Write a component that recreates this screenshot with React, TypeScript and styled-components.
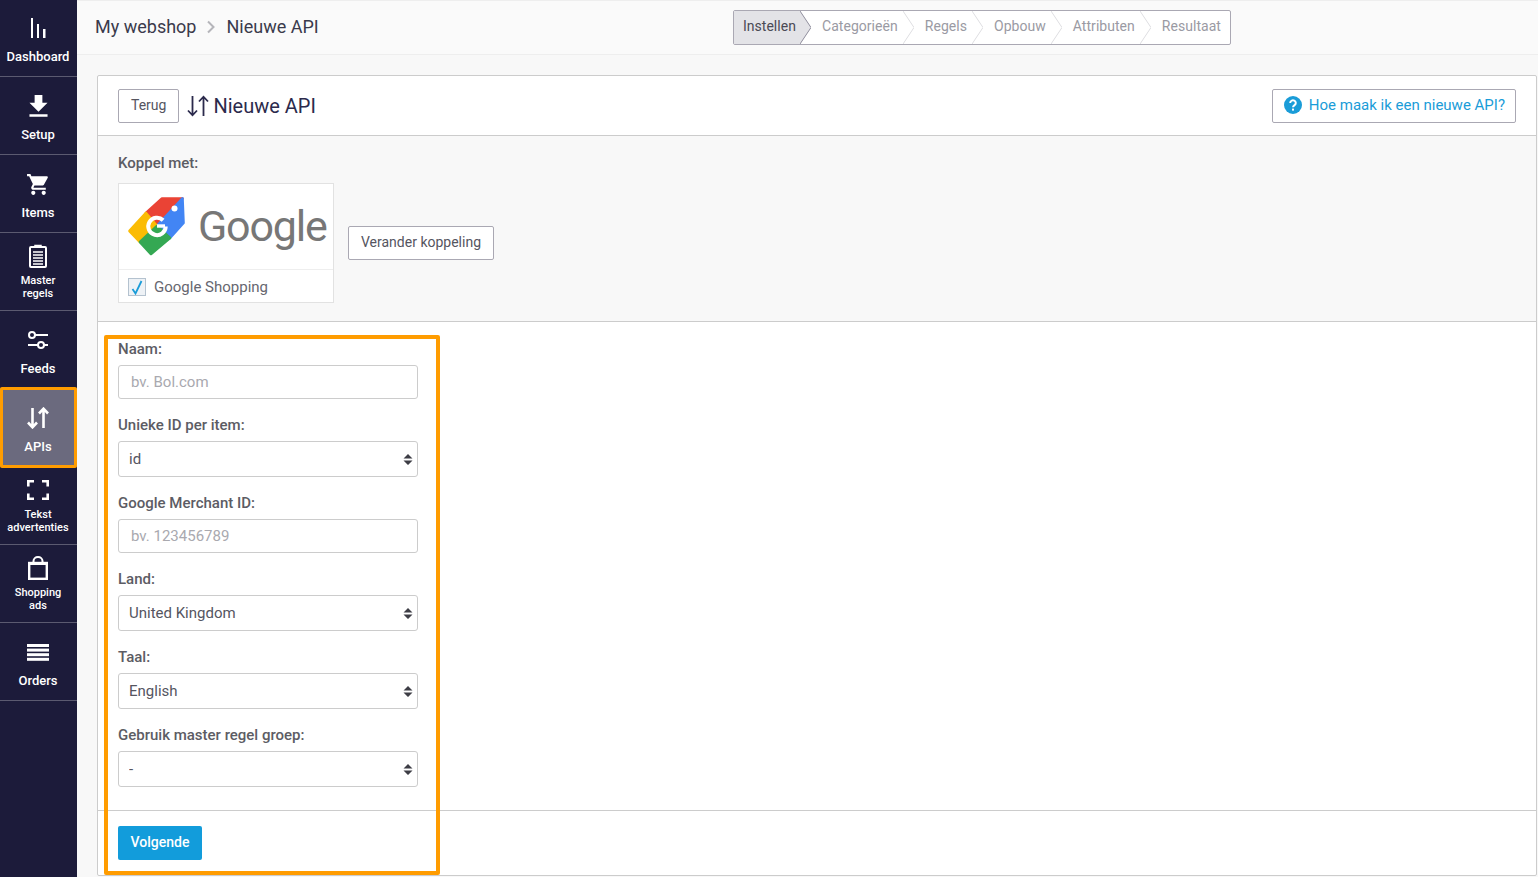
import React, { FunctionComponent, ReactNode } from "react";
import styled, { createGlobalStyle } from "styled-components";
import { MdFileDownload, MdShoppingCart } from "react-icons/md";

const GlobalStyle = createGlobalStyle`
  html, body {
    margin: 0;
    height: 100%;
    overflow: hidden;
    background: #f8f8f8;
    font-family: Roboto, "Liberation Sans", sans-serif;
  }
  * {
    box-sizing: border-box;
  }
`;

const Page = styled.div`
  display: flex;
  width: 1538px;
  height: 877px;
  overflow: hidden;
`;

const Sidebar = styled.nav`
  flex: 0 0 77px;
  background: #1c1b3a;
`;

const NavItem = styled.a<{ $twoLine?: boolean; $active?: boolean }>`
  position: relative;
  display: flex;
  flex-direction: column;
  align-items: center;
  height: 78px;
  padding: ${(p) => (p.$twoLine ? "9px" : "15px")} 1px 0 0;
  border-bottom: 1px solid #5b5a70;
  background: ${(p) => (p.$active ? "#6b6a7e" : "transparent")};
  color: #fff;
  text-align: center;

  &:first-child {
    height: 77px;
    padding-top: 14px;
  }
`;

const ActiveRing = styled.span`
  position: absolute;
  top: -2px;
  left: 0;
  right: 0;
  bottom: -2px;
  border: 3.5px solid #ff9c00;
  border-radius: 2px;
`;

const NavIcon = styled.span`
  display: flex;
  align-items: center;
  justify-content: center;
  height: 28px;
`;

const NavLabel = styled.span<{ $twoLine?: boolean }>`
  margin-top: ${(p) => (p.$twoLine ? "4px" : "7px")};
  font-size: ${(p) => (p.$twoLine ? "11px" : "13px")};
  line-height: ${(p) => (p.$twoLine ? "13px" : "16px")};
  font-weight: 500;
`;

const Main = styled.main`
  flex: 1;
  min-width: 0;
`;

const TopBar = styled.header`
  display: flex;
  align-items: center;
  justify-content: space-between;
  height: 55px;
  padding: 0 307px 0 18px;
  background: #fafafa;
  border-top: 1px solid #eeeeee;
  border-bottom: 1px solid #eeeeee;
`;

const Crumbs = styled.div`
  display: flex;
  align-items: center;
  padding-bottom: 2px;
  font-size: 18px;
  color: #3a3a4c;
`;

const CrumbArrow = styled.svg`
  margin: 1px 10px 0 10px;
`;

const Stepper = styled.ol`
  display: flex;
  height: 35px;
  margin: 0;
  padding: 0;
  list-style: none;
  background: #fff;
  border: 1px solid #aaa8b3;
  border-radius: 2px;
`;

const Step = styled.li<{ $active?: boolean }>`
  position: relative;
  display: flex;
  align-items: center;
  padding: 0 5px 3px 22px;
  font-size: 14px;
  letter-spacing: 0.04px;
  color: ${(p) => (p.$active ? "#4a4a55" : "#9a9aa3")};
  background: ${(p) => (p.$active ? "#e3e3e7" : "transparent")};

  &:first-child {
    padding-left: 9px;
    padding-right: 4px;
  }
  &:last-child {
    padding-right: 9px;
  }
`;

const StepTip = styled.svg`
  position: absolute;
  top: 0;
  left: 100%;
`;

const Card = styled.section`
  position: relative;
  width: 1440px;
  height: 801px;
  margin: 20px 0 0 20px;
  background: #fff;
  border: 1px solid #cccccc;
  border-radius: 2px;
`;

const CardHeader = styled.div`
  display: flex;
  align-items: center;
  height: 60px;
  padding: 0 20px;
  border-bottom: 1px solid #cccccc;
`;

const Button = styled.button`
  height: 34px;
  padding: 0 12px 2px;
  background: #fff;
  border: 1px solid #aaa8b3;
  border-radius: 2px;
  font-family: inherit;
  font-size: 14px;
  color: #55555f;
`;

const Title = styled.h1`
  display: flex;
  align-items: center;
  gap: 4px;
  margin: 0 0 0 8px;
  font-size: 20px;
  font-weight: 400;
  color: #2b2a4c;
`;

const HelpButton = styled(Button)`
  display: flex;
  align-items: center;
  gap: 7px;
  margin-left: auto;
  padding: 0 10px 2px 11px;
  font-size: 15px;
  color: #1a9cd8;
`;

const LinkSection = styled.div`
  height: 186px;
  padding: 17px 20px 0;
  background: #f8f8f8;
  border-bottom: 1px solid #cccccc;
`;

const Label = styled.label`
  display: block;
  height: 20px;
  margin-bottom: 6px;
  font-size: 15px;
  font-weight: 500;
  line-height: 20px;
  color: #5c5c64;
`;

const LinkRow = styled.div`
  display: flex;
  align-items: center;
  gap: 14px;
  margin-top: 10px;
`;

const ChannelBox = styled.div`
  width: 216px;
  height: 120px;
  background: #fff;
  border: 1px solid #e2e2e2;
`;

const ChannelLogo = styled.div`
  display: flex;
  align-items: center;
  height: 86px;
  padding-left: 8px;
  border-bottom: 1px solid #eeeeee;
`;

const GoogleWord = styled.span`
  margin: 0 0 1px 11px;
  font-size: 43px;
  font-weight: 400;
  letter-spacing: -1.2px;
  color: #777777;
`;

const ChannelName = styled.div`
  display: flex;
  align-items: center;
  gap: 8px;
  height: 32px;
  padding: 2px 0 0 9px;
  font-size: 15px;
  color: #66666f;
`;

const CheckBox = styled.span`
  display: flex;
  align-items: center;
  justify-content: center;
  width: 18px;
  height: 18px;
  background: #eef2f6;
  border: 1px solid #b4c2cf;
`;

const FormBody = styled.form`
  height: 489px;
  padding: 17px 20px 0;
  border-bottom: 1px solid #cccccc;
`;

const Field = styled.div`
  width: 300px;
  margin-bottom: 16px;
`;

const TextInput = styled.input`
  display: block;
  width: 100%;
  height: 34px;
  padding: 0 12px;
  background: #fff;
  border: 1px solid #cccccc;
  border-radius: 3px;
  font-family: inherit;
  font-size: 15px;
  color: #55555f;

  &::placeholder {
    color: #a9a9af;
    opacity: 1;
  }
`;

const SelectWrap = styled.div`
  position: relative;
`;

const Select = styled.select`
  display: block;
  width: 100%;
  height: 36px;
  padding: 0 24px 0 10px;
  appearance: none;
  background: #fff;
  border: 1px solid #cccccc;
  border-radius: 3px;
  font-family: inherit;
  font-size: 15px;
  color: #55555f;
`;

const SelectArrows = styled.svg`
  position: absolute;
  top: 13px;
  right: 5px;
  pointer-events: none;
`;

const Footer = styled.div`
  padding: 15px 20px;
`;

const PrimaryButton = styled.button`
  width: 84px;
  height: 34px;
  padding: 0 0 2px;
  background: #129cdb;
  border: 0;
  border-radius: 2px;
  font-family: inherit;
  font-size: 14px;
  font-weight: 500;
  color: #fff;
`;

const FormHighlight = styled.div`
  position: absolute;
  top: 259px;
  left: 6px;
  width: 336px;
  height: 540px;
  border: 4px solid #ff9c00;
  border-radius: 2px;
  pointer-events: none;
`;

const DashboardIcon = () => (
  <svg width="18" height="20" viewBox="0 0 18 20" fill="#fff">
    <rect x="2" y="0" width="2" height="20" />
    <rect x="8" y="6" width="2" height="14" />
    <rect x="14" y="11" width="2.5" height="9" />
  </svg>
);

const ClipboardIcon = () => (
  <svg width="18" height="24" viewBox="0 0 18 24" fill="none" stroke="#fff">
    <rect x="1" y="3" width="16" height="20" rx="1" strokeWidth="2" />
    <path d="M6 3V1.5h6V3" fill="#fff" strokeWidth="1.5" />
    <path d="M4 8h10M4 11h10M4 14h10M4 17h10M4 20h10" strokeWidth="1.4" />
  </svg>
);

const FeedsIcon = () => (
  <svg width="22" height="20" viewBox="0 0 22 20" fill="none" stroke="#fff" strokeWidth="2">
    <circle cx="5" cy="5" r="3" />
    <path d="M8 5h13" />
    <circle cx="14" cy="15" r="3" />
    <path d="M1 15h10M17 15h4" />
  </svg>
);

const SwapIcon: FunctionComponent<{ size: number; weight: number; color: string }> = ({
  size,
  weight,
  color,
}) => (
  <svg width={size} height={size} viewBox="0 0 22 22" fill="none" stroke={color} strokeWidth={weight}>
    <path d="M5.5 1v19M1 15.5l4.5 4.8 4.5-4.8" />
    <path d="M16.5 21V2M12 6.5l4.5-4.8L21 6.5" />
  </svg>
);

const CornersIcon = () => (
  <svg width="22" height="20" viewBox="0 0 22 20" fill="none" stroke="#fff" strokeWidth="2.6">
    <path d="M1.3 6.5V1.3H7M15 1.3h5.7V6.5M20.7 13.5v5.2H15M7 18.7H1.3V13.5" />
  </svg>
);

const BagIcon = () => (
  <svg width="20" height="24" viewBox="0 0 20 24" fill="none" stroke="#fff">
    <rect x="1.2" y="7" width="17.6" height="15.8" strokeWidth="2.4" />
    <path d="M5.5 7V5a4.5 4 0 0 1 9 0v2" strokeWidth="2" />
    <rect x="1" y="6" width="18" height="3" fill="#fff" strokeWidth="0" />
  </svg>
);

const OrdersIcon = () => (
  <svg width="22" height="17" viewBox="0 0 22 17" fill="#fff">
    <rect y="0" width="22" height="3" />
    <rect y="4.6" width="22" height="3" />
    <rect y="9.2" width="22" height="3" />
    <rect y="13.8" width="22" height="3" />
  </svg>
);

const HelpIcon = () => (
  <svg width="18" height="18" viewBox="0 0 18 18">
    <circle cx="9" cy="9" r="9" fill="#1a9cd8" />
    <path
      d="M6.2 7a2.8 2.6 0 1 1 4.4 2.1c-1 .7-1.6 1.1-1.6 2.2"
      fill="none"
      stroke="#fff"
      strokeWidth="2"
    />
    <rect x="8" y="12.6" width="2" height="2" fill="#fff" />
  </svg>
);

const GoogleTag = () => (
  <svg width="60" height="60" viewBox="0 1 60 60" strokeLinejoin="round" strokeWidth="2.6">
    <path d="M35 2.5h20.5L30 30 19 17z" fill="#ea4335" stroke="#ea4335" />
    <path d="M55.5 2.5l1 24.5-13.5 15-13-12z" fill="#4285f4" stroke="#4285f4" />
    <path d="M19 17l11 13-17 16L2.5 35z" fill="#fbbc04" stroke="#fbbc04" />
    <path d="M13 46l17-16 13 12-19 16z" fill="#34a853" stroke="#34a853" />
    <circle cx="47.5" cy="12.5" r="3" fill="#fff" stroke="none" />
    <path
      d="M38.7 30.5a8.7 8.7 0 1 1-2.6-6.3"
      fill="none"
      stroke="#fff"
      strokeWidth="4"
      strokeLinejoin="miter"
    />
    <path d="M30 30h8" fill="none" stroke="#fff" strokeWidth="3.4" />
  </svg>
);

type NavEntry = { label: ReactNode; icon: ReactNode; twoLine?: boolean; active?: boolean };

const navEntries: NavEntry[] = [
  { label: "Dashboard", icon: <DashboardIcon /> },
  { label: "Setup", icon: <MdFileDownload size={31} /> },
  { label: "Items", icon: <MdShoppingCart size={25} /> },
  { label: <>Master<br />regels</>, icon: <ClipboardIcon />, twoLine: true },
  { label: "Feeds", icon: <FeedsIcon /> },
  { label: "APIs", icon: <SwapIcon size={22} weight={2.6} color="#fff" />, active: true },
  { label: <>Tekst<br />advertenties</>, icon: <CornersIcon />, twoLine: true },
  { label: <>Shopping<br />ads</>, icon: <BagIcon />, twoLine: true },
  { label: "Orders", icon: <OrdersIcon /> },
];

const steps = ["Instellen", "Categorieën", "Regels", "Opbouw", "Attributen", "Resultaat"];

const SelectField: FunctionComponent<{ label: string; value: string }> = ({ label, value }) => (
  <Field>
    <Label>{label}</Label>
    <SelectWrap>
      <Select defaultValue={value}>
        <option value={value}>{value}</option>
      </Select>
      <SelectArrows width="10" height="11" viewBox="0 0 10 11" fill="#3d3d45">
        <path d="M0.5 4.5L5 0l4.5 4.5zM0.5 6.5L5 11l4.5-4.5z" />
      </SelectArrows>
    </SelectWrap>
  </Field>
);

const App: FunctionComponent = () => {
  return (
    <Page>
      <GlobalStyle />
      <Sidebar>
        {navEntries.map((entry, i) => (
          <NavItem key={i} $twoLine={entry.twoLine} $active={entry.active}>
            <NavIcon>{entry.icon}</NavIcon>
            <NavLabel $twoLine={entry.twoLine}>{entry.label}</NavLabel>
            {entry.active && <ActiveRing />}
          </NavItem>
        ))}
      </Sidebar>

      <Main>
        <TopBar>
          <Crumbs>
            My webshop
            <CrumbArrow width="10" height="14" viewBox="0 0 10 14" fill="none" stroke="#b5b5ba" strokeWidth="2">
              <path d="M2 1.5L7.5 7 2 12.5" />
            </CrumbArrow>
            Nieuwe API
          </Crumbs>
          <Stepper>
            {steps.map((step, i) => (
              <Step key={step} $active={i === 0}>
                {step}
                {i < steps.length - 1 && (
                  <StepTip width="11" height="33" viewBox="0 0 11 33">
                    <path
                      d="M0 0L11 16.5 0 33"
                      fill={i === 0 ? "#e3e3e7" : "#fff"}
                      stroke={i === 0 ? "#8f8e9c" : "#dedee2"}
                    />
                  </StepTip>
                )}
              </Step>
            ))}
          </Stepper>
        </TopBar>

        <Card>
          <CardHeader>
            <Button>Terug</Button>
            <Title>
              <SwapIcon size={22} weight={1.8} color="#2b2a4c" />
              Nieuwe API
            </Title>
            <HelpButton>
              <HelpIcon />
              Hoe maak ik een nieuwe API?
            </HelpButton>
          </CardHeader>

          <LinkSection>
            <Label>Koppel met:</Label>
            <LinkRow>
              <ChannelBox>
                <ChannelLogo>
                  <GoogleTag />
                  <GoogleWord>Google</GoogleWord>
                </ChannelLogo>
                <ChannelName>
                  <CheckBox>
                    <svg width="14" height="15" viewBox="0 0 14 15" fill="none" stroke="#1a9cd8" strokeWidth="1.8">
                      <path d="M2.5 9l3 4.5L11.5 1" />
                    </svg>
                  </CheckBox>
                  Google Shopping
                </ChannelName>
              </ChannelBox>
              <Button>Verander koppeling</Button>
            </LinkRow>
          </LinkSection>

          <FormBody>
            <Field>
              <Label>Naam:</Label>
              <TextInput placeholder="bv. Bol.com" />
            </Field>
            <SelectField label="Unieke ID per item:" value="id" />
            <Field>
              <Label>Google Merchant ID:</Label>
              <TextInput placeholder="bv. 123456789" />
            </Field>
            <SelectField label="Land:" value="United Kingdom" />
            <SelectField label="Taal:" value="English" />
            <SelectField label="Gebruik master regel groep:" value="-" />
          </FormBody>

          <Footer>
            <PrimaryButton>Volgende</PrimaryButton>
          </Footer>

          <FormHighlight />
        </Card>
      </Main>
    </Page>
  );
};

export default App;
